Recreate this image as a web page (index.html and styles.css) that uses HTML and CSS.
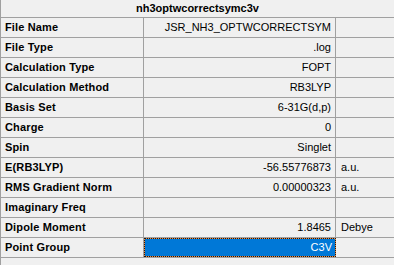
FILE: index.html
```html
<!DOCTYPE html>
<html>
<head>
<meta charset="utf-8">
<link rel="stylesheet" href="styles.css">
</head>
<body>
<div class="grid">
  <div class="title">nh3optwcorrectsymc3v</div>
  <div class="row"><div class="key">File Name</div><div class="val">JSR_NH3_OPTWCORRECTSYM</div><div class="unit"></div></div>
  <div class="row"><div class="key">File Type</div><div class="val">.log</div><div class="unit"></div></div>
  <div class="row"><div class="key">Calculation Type</div><div class="val">FOPT</div><div class="unit"></div></div>
  <div class="row"><div class="key">Calculation Method</div><div class="val">RB3LYP</div><div class="unit"></div></div>
  <div class="row"><div class="key">Basis Set</div><div class="val">6-31G(d,p)</div><div class="unit"></div></div>
  <div class="row"><div class="key">Charge</div><div class="val">0</div><div class="unit"></div></div>
  <div class="row"><div class="key">Spin</div><div class="val">Singlet</div><div class="unit"></div></div>
  <div class="row"><div class="key">E(RB3LYP)</div><div class="val">-56.55776873</div><div class="unit">a.u.</div></div>
  <div class="row"><div class="key">RMS Gradient Norm</div><div class="val">0.00000323</div><div class="unit">a.u.</div></div>
  <div class="row"><div class="key">Imaginary Freq</div><div class="val"></div><div class="unit"></div></div>
  <div class="row"><div class="key">Dipole Moment</div><div class="val">1.8465</div><div class="unit">Debye</div></div>
  <div class="row"><div class="key">Point Group</div><div class="val selected">C3V</div><div class="unit"></div></div>
</div>
</body>
</html>
```
FILE: styles.css
```css
html, body {
  margin: 0;
  padding: 0;
  background: #f0f0f0;
}

.grid {
  width: 393px;
  height: 265px;
  border-left: 1px solid #a0a0a0;
  font-family: "Liberation Sans", Arial, sans-serif;
  font-size: 11px;
  color: #000;
  overflow: hidden;
}

.title {
  height: 17px;
  line-height: 17px;
  text-align: center;
  font-weight: bold;
  border-bottom: 1px solid #a0a0a0;
}

.row {
  display: grid;
  grid-template-columns: 143px 192px 1fr;
  height: 20px;
  border-bottom: 1px solid #a0a0a0;
  box-sizing: border-box;
}

.key, .val, .unit {
  line-height: 19px;
  white-space: nowrap;
  overflow: hidden;
}

.key {
  font-weight: bold;
  letter-spacing: 0.15px;
  padding-left: 4px;
  border-right: 1px solid #a0a0a0;
}

.val {
  text-align: right;
  padding-right: 4px;
  border-right: 1px solid #a0a0a0;
}

.unit {
  padding-left: 5px;
}

/* focused cell: blue fill with a dotted focus rectangle */
.selected {
  color: #fff;
  border: 1px dotted #1a1a1a;
  background: linear-gradient(#0078d7, #0078d7) padding-box, #f08a3c border-box;
  line-height: 17px;
  padding-right: 3px;
}
```
